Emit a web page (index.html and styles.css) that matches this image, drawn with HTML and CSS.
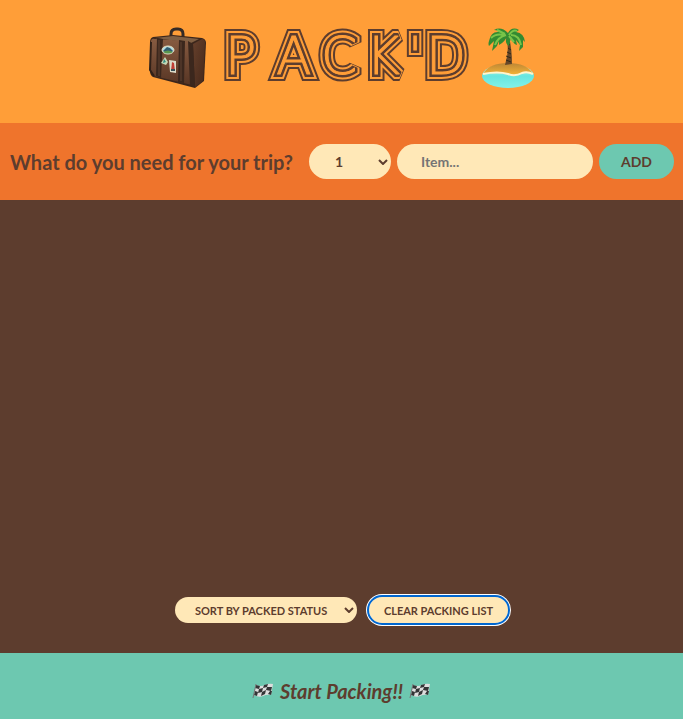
FILE: index.html
```html
<!DOCTYPE html>
<html lang="en">
<head>
<meta charset="utf-8">
<meta name="viewport" content="width=device-width, initial-scale=1">
<title>Pack'd</title>
<link rel="stylesheet" href="styles.css">
</head>
<body>
<div class="app">
  <header class="header">
    <svg class="case" viewBox="0 0 58 62" aria-hidden="true">
      <defs>
        <linearGradient id="leather" x1="0" y1="0" x2="0" y2="1"><stop offset="0" stop-color="#875b41"/><stop offset="1" stop-color="#573524"/></linearGradient>
        <linearGradient id="side" x1="0" y1="0" x2="1" y2="1"><stop offset="0" stop-color="#66402c"/><stop offset="1" stop-color="#442719"/></linearGradient>
      </defs>
      <path d="M22 11V7Q22 2 27 2H29Q34 2 34 7V12" fill="none" stroke="#352b26" stroke-width="3"/>
      <path d="M4 10 24 8 53 11Q57 12 57 16L55 54 46 61 4 50Q1 48 1 44V15Q1 11 4 10Z" fill="#3c261b"/>
      <path d="M6 11 24 9 50 12 42 16Z" fill="#806044"/>
      <path d="M2 15Q2 11 6 12L38 14Q42 15 42 19L43 58 5 49Q2 47 2 43Z" fill="url(#leather)"/>
      <path d="M44 17 53 12Q56 12 56 16L54 54 46 60Z" fill="url(#side)"/>
      <path d="M8 11 14 12 12 51 7 49ZM30 13 36 14 35 56 29 55ZM39 14 44 17 46 60 41 58Z" fill="#3b271d"/>
      <path d="M2 15 1 43 5 49" fill="none" stroke="#302018" stroke-width="2"/>
      <path d="M10 13V49M32 15V54" stroke="#604332" stroke-width="1"/>
      <ellipse cx="19" cy="23" rx="6" ry="4" fill="#b3dce2" stroke="#e6ddbf" stroke-width="1"/>
      <path d="M14 24 18 20 21 21 24 24Q20 28 14 24Z" fill="#305d70"/><path d="M14 25Q19 22 24 25 19 28 14 25Z" fill="#5b974d"/>
      <path d="m16 30 3 5-2 3-5-2Z" fill="#c5d9b6"/><path d="m15 32 2 3-3 1Z" fill="#328d83"/>
      <path d="m20 33 7 1v12l-6-1Z" fill="#dddcc9"/><path d="m23 35 2 1 1 8h-4Z" fill="#c13e35"/><path d="M22 42h4v2h-4Z" fill="#354f55"/>
    </svg>
    <h1 class="title">
      <svg class="wordmark" viewBox="0 0 254 60">
        <defs><text id="word" x="8 59 104 149 191 209" y="47">PACK'D</text></defs>
        <use href="#word" class="line line-outer"/>
        <use href="#word" class="line line-gap"/>
        <use href="#word" class="line line-inner"/>
        <use href="#word" class="line line-core"/>
      </svg>
    </h1>
    <svg class="island" viewBox="0 0 54 62" aria-hidden="true">
      <defs>
        <linearGradient id="sea" x1="0" y1="0" x2="0" y2="1"><stop offset="0" stop-color="#d7f7df"/><stop offset=".5" stop-color="#67e6df"/><stop offset="1" stop-color="#83f1e8"/></linearGradient>
        <linearGradient id="sand" x1="0" y1="0" x2="0" y2="1"><stop offset="0" stop-color="#bd8635"/><stop offset="1" stop-color="#f6b538"/></linearGradient>
      </defs>
      <ellipse cx="27" cy="49" rx="26" ry="12" fill="url(#sea)"/>
      <path d="M2 47Q8 36 27 36T52 47Q46 44 41 46 34 50 27 47 17 44 2 47Z" fill="url(#sand)"/>
      <path d="M2 47Q17 44 27 47 34 50 41 46 46 44 52 47" fill="none" stroke="#fff5ce" stroke-width="2"/>
      <path d="M25 10Q29 22 24 38L31 37Q31 22 28 10Z" fill="#654628"/>
      <path d="m26 16 3 2m-2 3 3 2m-4 2 4 2m-5 2 5 2m-5 2 5 2" stroke="#302818" stroke-width="1"/>
      <path d="M27 6Q20-1 13 3 17 3 18 5 10 4 8 14 7 17 8 19L13 14 11 24 16 19 18 14 18 18Q24 15 26 9 23 16 28 19L30 10Q32 17 36 18L35 13 39 18 38 24 42 20 42 13 44 15Q43 6 35 5L38 3Q31-1 27 6Z" fill="#338b31"/>
      <path d="M10 11Q15 6 23 8M14 18Q17 10 25 8M16 3 24 7M28 8Q32 2 36 4M30 8Q38 8 40 18M28 9 33 15" fill="none" stroke="#79c449" stroke-width="2"/>
    </svg>
  </header>

  <form class="add-form">
    <h2 class="question">What do you need for your trip?</h2>
    <div class="fields">
      <span class="select-wrap">
        <select class="pill quantity" aria-label="Quantity"><option>1</option><option>2</option><option>3</option></select>
        <svg class="chevron" viewBox="0 0 10 6" aria-hidden="true"><path d="M1 1 5 5 9 1"/></svg>
      </span>
      <input class="pill item" type="text" placeholder="Item..." aria-label="Item">
      <button class="pill add" type="button">ADD</button>
    </div>
  </form>

  <main class="list">
    <div class="actions">
      <span class="select-wrap">
        <select class="pill small sort" aria-label="Sort"><option>SORT BY PACKED STATUS</option><option>SORT BY INPUT ORDER</option></select>
        <svg class="chevron" viewBox="0 0 10 6" aria-hidden="true"><path d="M1 1 5 5 9 1"/></svg>
      </span>
      <button class="pill small clear" type="button">CLEAR PACKING LIST</button>
    </div>
  </main>

  <footer class="footer">
    <svg class="flag" viewBox="0 0 22 16" aria-hidden="true">
      <path d="M4 2Q9 4 13 2T21 1L19 12Q15 11 11 13T2 12Z" fill="#ddd"/>
      <path d="m4 2 4 1-1 3-4-1Zm8 0 4-1-1 3-4 1ZM7 6l4-1-1 4-4 1Zm8-2 5 0-1 4-5-1ZM3 8l3 1-1 4-3-1Zm7 1 4-2-1 4-4 2Zm8-1 2 0-1 4-3-1Z" fill="#343536"/>
      <path d="M4 1 1 15" stroke="#777" stroke-width="1"/>
    </svg>
    <em>Start Packing!!</em>
    <svg class="flag" viewBox="0 0 22 16" aria-hidden="true">
      <path d="M4 2Q9 4 13 2T21 1L19 12Q15 11 11 13T2 12Z" fill="#ddd"/>
      <path d="m4 2 4 1-1 3-4-1Zm8 0 4-1-1 3-4 1ZM7 6l4-1-1 4-4 1Zm8-2 5 0-1 4-5-1ZM3 8l3 1-1 4-3-1Zm7 1 4-2-1 4-4 2Zm8-1 2 0-1 4-3-1Z" fill="#343536"/>
      <path d="M4 1 1 15" stroke="#777" stroke-width="1"/>
    </svg>
  </footer>
</div>
</body>
</html>
```
FILE: styles.css
```css
* { box-sizing: border-box; margin: 0; padding: 0; }

:root {
  --brown: #5d3d2e;
  --amber: #ff9e38;
  --orange: #ef742c;
  --cream: #ffe8b7;
  --mint: #6dc8b0;
}

body {
  color: var(--brown);
  font-family: Lato, "Open Sans", sans-serif;
  font-weight: 700;
}

.app {
  display: grid;
  grid-template-columns: minmax(0, 1fr);
  grid-template-rows: auto auto 1fr auto;
  min-height: 100vh;
}

.header {
  display: flex;
  justify-content: center;
  align-items: flex-start;
  gap: 10px;
  padding: 27px 0 34px;
  background: var(--amber);
}

.case { width: 58px; height: 62px; }
.island { width: 54px; height: 62px; }
.title { display: flex; font-size: 52px; }
.wordmark { width: 254px; height: 60px; overflow: visible; }
.line { font-family: "DejaVu Sans Light", "DejaVu Sans", sans-serif; font-weight: 200; stroke-miterlimit: 2; }
.line-outer { fill: var(--brown); stroke: var(--brown); stroke-width: 14px; }
.line-gap { fill: var(--amber); stroke: var(--amber); stroke-width: 10px; }
.line-inner { fill: var(--brown); stroke: var(--brown); stroke-width: 6px; }
.line-core { fill: var(--amber); stroke: var(--amber); stroke-width: 1px; }

.add-form {
  display: flex;
  align-items: center;
  gap: 16px;
  padding: 21px 9px 21px 10px;
  background: var(--orange);
}

.question { font-size: 20px; line-height: 24px; white-space: nowrap; }
.fields { display: flex; flex: 1; gap: 6px; min-width: 0; }

.pill {
  height: 35px;
  border: 0;
  border-radius: 18px;
  background: var(--cream);
  color: inherit;
  font: inherit;
  font-size: 14px;
}

.select-wrap { display: flex; position: relative; }
.select-wrap select { appearance: none; }
.chevron {
  position: absolute;
  right: 3px;
  top: calc(50% - 3px);
  width: 10px;
  height: 6px;
  fill: none;
  stroke: var(--brown);
  stroke-width: 2;
  pointer-events: none;
}

.quantity { width: 82px; padding-left: 26px; }
.item { flex: 1; min-width: 0; padding: 0 24px; }
.item::placeholder { color: #757575; }
.add { padding: 0 22px; background: var(--mint); }

.list {
  display: flex;
  flex-direction: column;
  justify-content: flex-end;
  padding: 30px;
  background: var(--brown);
}

.actions { display: flex; justify-content: center; gap: 12px; }
.pill.small { height: 26px; font-size: 11px; }
.sort { width: 182px; padding-left: 20px; }
.clear { padding: 0 15px; outline: 2px solid #0067d0; box-shadow: 0 0 0 3px #fff; }

.footer {
  display: flex;
  justify-content: center;
  align-items: center;
  gap: 6px;
  padding: 26px 0 16px;
  background: var(--mint);
  font-size: 20px;
  line-height: 24px;
}

.flag { width: 22px; height: 16px; }
```
